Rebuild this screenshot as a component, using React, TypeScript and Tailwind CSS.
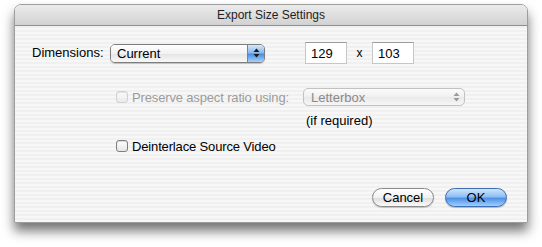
import React from "react";

const font = { fontFamily: '"Liberation Sans", Arial, sans-serif' };

function Arrows({ dim = false }: { dim?: boolean }) {
  const c = dim ? "#9a9a9a" : "#1a1a1a";
  return (
    <svg width="7" height="10" viewBox="0 0 7 10">
      <path d="M3.5 0.5 L6.5 4 L0.5 4 Z" fill={c} />
      <path d="M3.5 9.5 L6.5 6 L0.5 6 Z" fill={c} />
    </svg>
  );
}

function Checkbox({ dim = false }: { dim?: boolean }) {
  return (
    <span
      className={`inline-block w-[12px] h-[12px] rounded-[3px] border shrink-0 bg-[linear-gradient(#ffffff,#e6e6e6)] shadow-[inset_0_1px_1px_rgba(0,0,0,0.15)] ${
        dim ? "border-[#c4c4c4] opacity-70" : "border-[#7f7f7f]"
      }`}
    />
  );
}

export default function App() {
  return (
    <div className="w-[542px] h-[247px] bg-white pl-[14px] pt-[4px]" style={font}>
      <div className="w-[514px] h-[219px] rounded-t-[7px] flex flex-col border border-[#9d9d9d] shadow-[0_8px_12px_rgba(0,0,0,0.55)] overflow-hidden">
        {/* title bar */}
        <div className="h-[21px] shrink-0 bg-[linear-gradient(#ebebeb,#d2d2d2)] border-b border-[#8f8f8f] flex items-center justify-center">
          <span className="text-[12px] text-[#1e1e1e] leading-none">Export Size Settings</span>
        </div>

        {/* body */}
        <div className="flex-1 flex flex-col bg-[repeating-linear-gradient(180deg,#f0f0f0_0px,#f0f0f0_2px,#f7f7f7_2px,#f7f7f7_4px)] text-[13px] text-black">
          {/* dimensions row */}
          <div className="flex items-center mt-[15px] h-[24px]">
            <span className="ml-[17px] w-[78px]">Dimensions:</span>
            <div className="w-[155px] h-[19px] rounded-[5px] border border-[#7d7d7d] flex overflow-hidden shadow-[0_1px_1px_rgba(0,0,0,0.2)]">
              <div className="flex-1 bg-[linear-gradient(#ffffff,#f2f2f2_50%,#e4e4e4_51%,#f8f8f8)] flex items-center pl-[6px] leading-none">
                Current
              </div>
              <div className="w-[17px] border-l border-[#5d86c2] bg-[linear-gradient(#d5e8fb,#8bb9ef_45%,#4f8fe4_55%,#a9d0f9)] flex items-center justify-center">
                <Arrows />
              </div>
            </div>
            <div className="ml-[40px] w-[42px] h-[22px] bg-white border border-[#c6c6c6] border-t-[#9c9c9c] flex items-center pl-[5px] leading-none">
              129
            </div>
            <span className="w-[25px] text-center text-[12px] leading-none">x</span>
            <div className="w-[42px] h-[22px] bg-white border border-[#c6c6c6] border-t-[#9c9c9c] flex items-center pl-[5px] leading-none">
              103
            </div>
          </div>

          {/* preserve row */}
          <div className="flex items-center mt-[23px] h-[18px]">
            <div className="ml-[101px] w-[187px] flex items-center gap-[4px] text-[#9b9b9b]">
              <Checkbox dim />
              <span className="leading-none tracking-[-0.15px]">Preserve aspect ratio using:</span>
            </div>
            <div className="w-[162px] h-[18px] rounded-[5px] border border-[#c2c2c2] flex bg-[linear-gradient(#fbfbfb,#f0f0f0_50%,#e9e9e9_51%,#f6f6f6)]">
              <div className="flex-1 flex items-center pl-[7px] text-[#8a8a8a] leading-none">Letterbox</div>
              <div className="w-[16px] flex items-center justify-center">
                <Arrows dim />
              </div>
            </div>
          </div>

          <div className="mt-[8px] ml-[291px] leading-none h-[14px]">(if required)</div>

          {/* deinterlace row */}
          <div className="flex items-center mt-[11px] h-[14px] ml-[101px] gap-[4px]">
            <Checkbox />
            <span className="leading-none tracking-[-0.15px]">Deinterlace Source Video</span>
          </div>

          {/* buttons */}
          <div className="flex justify-end items-center mt-[35px] pr-[20px] gap-[11px]">
            <button className="w-[62px] h-[19px] rounded-full border border-[#8a8a8a] bg-[linear-gradient(#ffffff,#f1f1f1_50%,#dedede_55%,#fafafa)] text-[13px] leading-none shadow-[0_1px_1px_rgba(0,0,0,0.2)]">
              Cancel
            </button>
            <button className="w-[62px] h-[19px] rounded-full border border-[#3d6db5] bg-[linear-gradient(#cfe5fc,#8fbff3_45%,#4e91e8_55%,#9fd0fb)] text-[13px] leading-none shadow-[0_1px_1px_rgba(0,0,0,0.25)]">
              OK
            </button>
          </div>
        </div>
      </div>
    </div>
  );
}
